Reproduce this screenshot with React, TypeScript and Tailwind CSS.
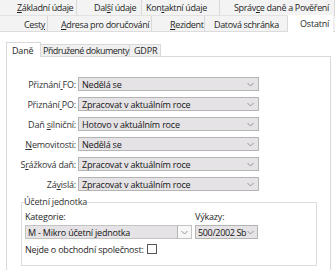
import React from "react";

const Chevron = () => (
  <svg width="7" height="5" viewBox="0 0 7 5" className="shrink-0">
    <polyline points="0.5,1 3.5,4 6.5,1" fill="none" stroke="#8a8a8a" strokeWidth="0.9" />
  </svg>
);

// text with one underlined access-key letter
const Key = ({ text, at }: { text: string; at?: number }) => {
  if (at === undefined) return <>{text}</>;
  return (
    <>
      {text.slice(0, at)}
      <span className="underline underline-offset-1">{text[at]}</span>
      {text.slice(at + 1)}
    </>
  );
};

const topRow = [
  { label: "Základní údaje", key: 0, w: "w-[77px]", pl: "pl-[17px]" },
  { label: "Další údaje", key: 3, w: "w-[65px]", pl: "pl-[17px]" },
  { label: "Kontaktní údaje", key: 3, w: "w-[78px]", pl: "pl-[4px]" },
  { label: "Správce daně a Pověření", key: 5, w: "w-[115px]", pl: "pl-[14px]" },
];

const bottomRow = [
  { label: "Cesty", key: 4, w: "w-[48px]", pl: "pl-[24px]" },
  { label: "Adresa pro doručování", key: 0, w: "w-[104px]", pl: "pl-[13px]" },
  { label: "Rezident", key: 0, w: "w-[53px]", pl: "pl-[18px]" },
  { label: "Datová schránka", key: undefined, w: "w-[83px]", pl: "pl-[9px]" },
];

const rows = [
  { label: "Přiznání FO:", key: 8, value: "Nedělá se" },
  { label: "Přiznání PO:", key: 8, value: "Zpracovat v aktuálním roce" },
  { label: "Daň silniční:", key: 4, value: "Hotovo v aktuálním roce" },
  { label: "Nemovitosti:", key: 0, value: "Nedělá se" },
  { label: "Srážková daň:", key: 1, value: "Zpracovat v aktuálním roce" },
  { label: "Závislá:", key: 2, value: "Zpracovat v aktuálním roce" },
];

export default function App() {
  return (
    <div
      className="w-[335px] h-[270px] overflow-hidden bg-white text-[9px] leading-none tracking-[-0.2px] text-[#1f1f1f]"
      style={{ fontFamily: "'Open Sans', 'Noto Sans', sans-serif" }}
    >
      {/* outer tab strip */}
      <div className="bg-[#f0f0f0]">
        <div className="flex h-[16px] border-b border-[#e2e2e2]">
          {topRow.map((t) => (
            <div
              key={t.label}
              className={`${t.w} ${t.pl} shrink-0 flex items-center border-r border-[#d9d9d9] bg-[#f3f3f3] whitespace-nowrap tracking-[-0.35px]`}
            >
              <Key text={t.label} at={t.key} />
            </div>
          ))}
        </div>
        <div className="flex h-[16px]">
          {bottomRow.map((t) => (
            <div
              key={t.label}
              className={`${t.w} ${t.pl} shrink-0 flex items-center border-r border-[#d9d9d9] border-b border-b-[#dcdcdc] bg-[#f3f3f3] whitespace-nowrap pt-[1px] tracking-[-0.35px]`}
            >
              <Key text={t.label} at={t.key} />
            </div>
          ))}
          <div className="w-[45px] shrink-0 -mt-[1px] h-[17px] bg-white flex items-center pl-[12px] whitespace-nowrap">
            Ostatní
          </div>
          <div className="flex-1 border-b border-[#dcdcdc]" />
        </div>
      </div>

      {/* content */}
      <div className="pl-[6px] pr-[4px] pt-[10px]">
        {/* inner tabs */}
        <div className="flex items-end h-[15px]">
          <div className="w-[35px] h-[15px] bg-white border border-b-0 border-[#d9d9d9] flex items-center pl-[5px]">
            Daně
          </div>
          <div className="w-[89px] h-[13px] bg-[#f0f0f0] border border-l-0 border-[#d9d9d9] flex items-center pl-[2px] whitespace-nowrap tracking-[-0.5px]">
            Přidružené dokumenty
          </div>
          <div className="w-[31px] h-[13px] bg-[#f0f0f0] border border-l-0 border-[#d9d9d9] flex items-center pl-[4px]">
            GDPR
          </div>
          <div className="flex-1 border-b border-[#d9d9d9]" />
        </div>

        <div className="border border-t-0 border-[#d9d9d9] h-[220px] pt-[20px]">
          <div className="flex flex-col gap-[6px]">
            {rows.map((r) => (
              <div key={r.label} className="flex items-center">
                <div className="w-[70px] text-right pr-[1px] whitespace-nowrap text-[#333]">
                  <Key text={r.label} at={r.key} />
                </div>
                <div className="ml-[1px] w-[181px] h-[14px] bg-[#e6e3e6] border border-[#b4b4b4] flex items-center justify-between pl-[3px] pr-[4px] text-[#141414] whitespace-nowrap">
                  {r.value}
                  <Chevron />
                </div>
              </div>
            ))}
          </div>

          {/* group box */}
          <fieldset className="ml-[14px] mt-[6px] w-[296px] h-[69px] border border-[#dcdcdc] px-[3px]">
            <legend className="px-0 -ml-[1px] text-[#333] leading-[10px]">Účetní jednotka</legend>
            <div className="flex gap-[3px] pt-[5px]">
              <div className="flex flex-col gap-[4px]">
                <div className="h-[9px] flex items-center">Kategorie:</div>
                <div className="w-[167px] h-[14px] border border-[#c4c4c4] flex items-center bg-[#f7f7f7]">
                  <div className="w-[152px] h-[12px] bg-[#e6e3e6] border-r border-[#b4b4b4] flex items-center pl-[2px] whitespace-nowrap text-[#141414]">
                    M - Mikro účetní jednotka
                  </div>
                  <div className="flex-1 flex items-center justify-center">
                    <Chevron />
                  </div>
                </div>
              </div>
              <div className="flex flex-col gap-[4px]">
                <div className="h-[9px] flex items-center">Výkazy:</div>
                <div className="w-[63px] h-[14px] bg-[#e6e3e6] border border-[#b4b4b4] flex items-center justify-between pl-[2px] pr-[3px] whitespace-nowrap text-[#141414] tracking-[-0.35px]">
                  500/2002 Sb
                  <Chevron />
                </div>
              </div>
            </div>
            <div className="flex items-center mt-[5px] gap-[3px]">
              <span>Nejde o obchodní společnost:</span>
              <span className="w-[10px] h-[10px] border border-[#555] bg-white" />
            </div>
          </fieldset>
        </div>
      </div>
    </div>
  );
}
